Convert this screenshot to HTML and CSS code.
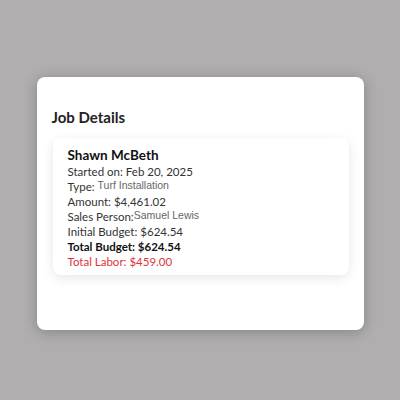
FILE: index.html
```html
<!DOCTYPE html>
<html lang="en">
<head>
  <meta charset="UTF-8">
  <title>Job Details</title>
  <link rel="stylesheet" href="styles.css">
</head>
<body>

  <div class="modal">
    <h2>Job Details</h2>

    <div class="card">
      <div class="nombre">Shawn McBeth</div>
      <div class="fila">Started on: Feb 20, 2025</div>
      <div class="fila">Type: <span class="dato">Turf Installation</span></div>
      <div class="fila">Amount: $4,461.02</div>
      <div class="fila">Sales Person:<span class="dato">Samuel Lewis</span></div>
      <div class="fila">Initial Budget: $624.54</div>
      <div class="fila total">Total Budget: $624.54</div>
      <div class="fila labor">Total Labor: $459.00</div>
    </div>
  </div>

</body>
</html>
```

FILE: styles.css
```css
html, body {
  height: 100%;
}

body {
  font-family: Lato, 'Noto Sans', sans-serif;
  margin: 0;
  padding-top: 7px;
  box-sizing: border-box;
  background-color: #b0aeae;
  display: flex;
  justify-content: center;
  align-items: center;
  color: #222;
}

.modal {
  background-color: #fff;
  width: 327px;
  height: 253px;
  box-sizing: border-box;
  border-radius: 8px;
  box-shadow: 0 2px 14px rgba(0, 0, 0, 0.25);
  padding: 30px 15px 0 15px;
}

h2 {
  font-size: 15px;
  font-weight: 700;
  margin: 0 0 11px 0;
  line-height: 20px;
  color: #222;
}

.card {
  background-color: #fff;
  border-radius: 8px;
  box-shadow: 0 3px 12px rgba(0, 0, 0, 0.1);
  padding: 9px 15px 6px 15px;
  margin-left: 1px;
}

.nombre {
  font-size: 13.5px;
  font-weight: bold;
  line-height: 17px;
  color: #111;
}

.fila {
  font-size: 11.5px;
  line-height: 15px;
  color: #333;
}

.dato {
  font-family: 'Liberation Sans', Arial, sans-serif;
  font-size: 10.5px;
  color: #666;
  vertical-align: top;
  line-height: 12px;
}

.total {
  font-weight: bold;
  color: #111;
}

.labor {
  color: #e0333c;
}
```
